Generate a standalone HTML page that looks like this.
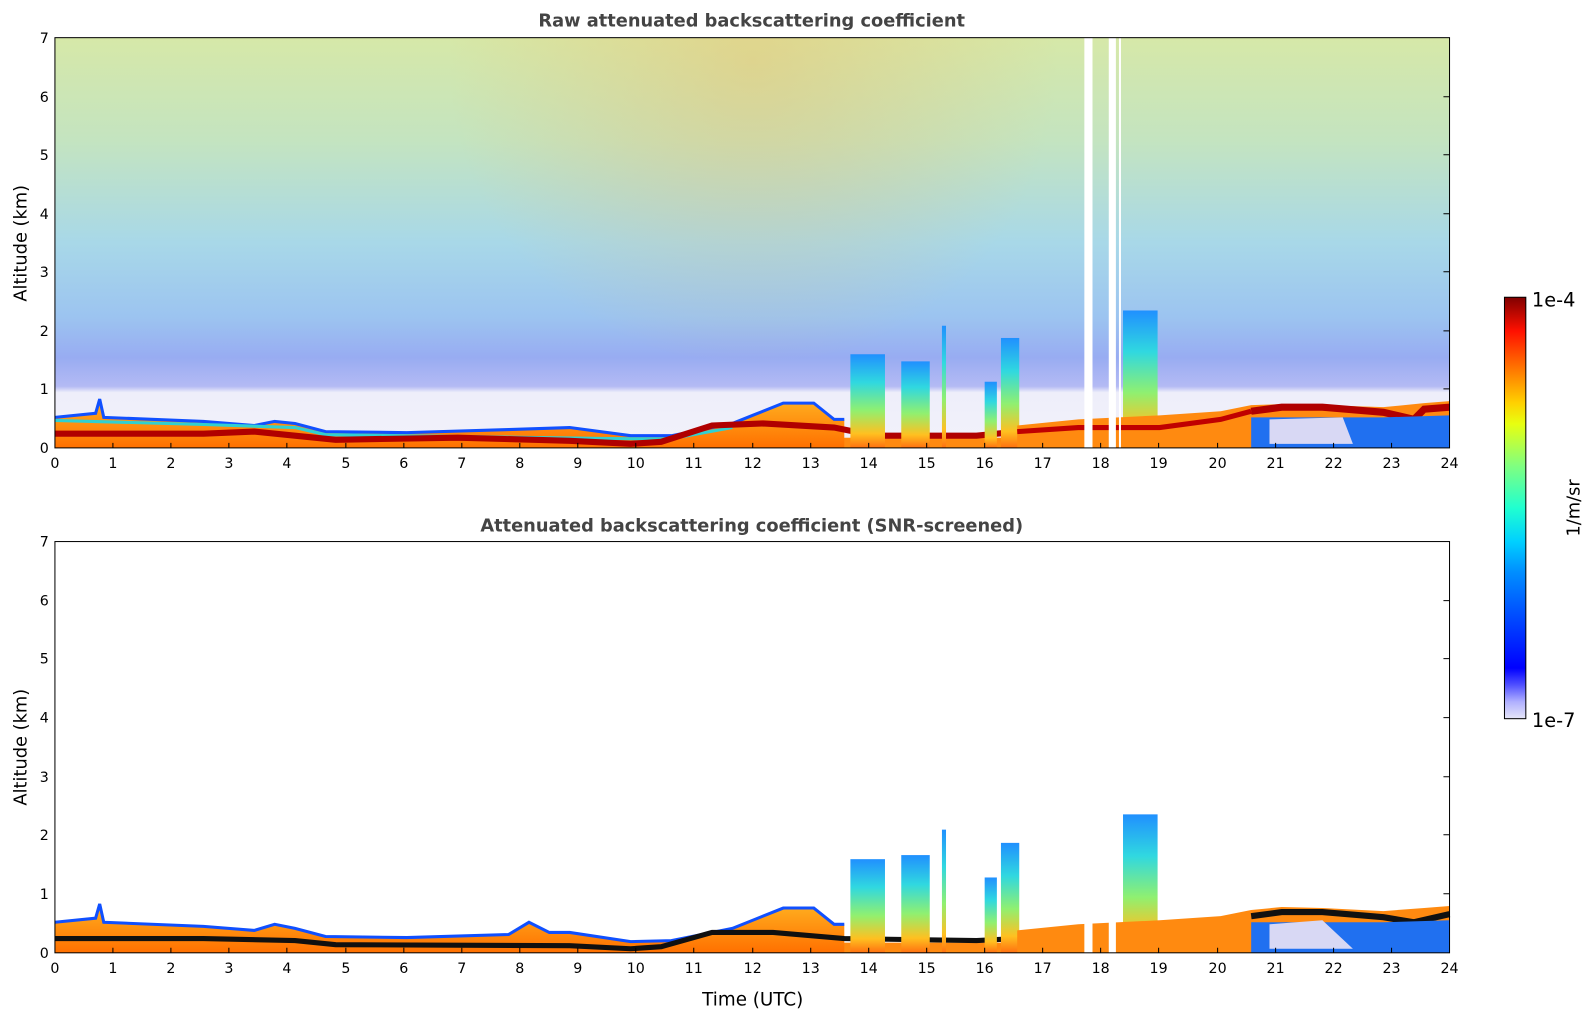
<!DOCTYPE html>
<html><head><meta charset="utf-8"><style>
html,body{margin:0;padding:0;background:#fff;}
svg{display:block}
text{font-family:"DejaVu Sans","Liberation Sans",sans-serif;}
</style></head><body>
<svg width="1595" height="1020" viewBox="0 0 1568 1002" preserveAspectRatio="none" xmlns="http://www.w3.org/2000/svg">
<defs>
<linearGradient id="bgTop" x1="0" y1="37" x2="0" y2="440" gradientUnits="userSpaceOnUse">
<stop offset="0" stop-color="#d6e8a8"/>
<stop offset="0.25" stop-color="#c4e4c0"/>
<stop offset="0.5" stop-color="#a8d8e8"/>
<stop offset="0.68" stop-color="#9cc4f0"/>
<stop offset="0.78" stop-color="#98acf2"/>
<stop offset="0.85" stop-color="#b4baf4"/>
<stop offset="0.865" stop-color="#eeeefa"/>
<stop offset="1" stop-color="#f2f2fa"/>
</linearGradient>
<radialGradient id="orangeTop" cx="740" cy="60" r="300" gradientUnits="userSpaceOnUse">
<stop offset="0" stop-color="#f0b860" stop-opacity="0.4"/>
<stop offset="1" stop-color="#f0b860" stop-opacity="0"/>
</radialGradient>
<linearGradient id="cloud" x1="0" y1="0" x2="0" y2="1">
<stop offset="0" stop-color="#2090ff"/>
<stop offset="0.3" stop-color="#30d8e0"/>
<stop offset="0.6" stop-color="#90f070"/>
<stop offset="0.85" stop-color="#ffc020"/>
<stop offset="1" stop-color="#ff7010"/>
</linearGradient>
<linearGradient id="bl" x1="0" y1="0" x2="0" y2="1">
<stop offset="0" stop-color="#ffb020"/>
<stop offset="1" stop-color="#ff7000"/>
</linearGradient>
<linearGradient id="cb" x1="0" y1="1" x2="0" y2="0">
<stop offset="0" stop-color="#e6e6f8"/>
<stop offset="0.04" stop-color="#b0b0ff"/>
<stop offset="0.08" stop-color="#5050ff"/>
<stop offset="0.12" stop-color="#0000ff"/>
<stop offset="0.25" stop-color="#0050ff"/>
<stop offset="0.35" stop-color="#0090ff"/>
<stop offset="0.42" stop-color="#00d0ff"/>
<stop offset="0.5" stop-color="#20ffd0"/>
<stop offset="0.6" stop-color="#80ff80"/>
<stop offset="0.7" stop-color="#e8ff10"/>
<stop offset="0.75" stop-color="#ffd000"/>
<stop offset="0.85" stop-color="#ff6000"/>
<stop offset="0.92" stop-color="#ff1000"/>
<stop offset="1" stop-color="#800000"/>
</linearGradient>
</defs>

<text x="739" y="26" text-anchor="middle" font-size="17.5" font-weight="bold" fill="#444">Raw attenuated backscattering coefficient</text>
<rect x="54" y="37" width="1371" height="403" fill="url(#bgTop)"/>
<rect x="54" y="37" width="1371" height="403" fill="url(#orangeTop)"/>
<rect x="54" y="430" width="1371" height="10" fill="#ff8a10"/>
<path d="M54,410 L94,406 L98,392 L102,410 L200,414 L250,418 L270,414 L290,416 L320,424 L400,425 L500,422 L560,420 L620,428 L660,428 L720,416 L740,408 L770,396 L800,396 L820,412 L830,412 L830,440 L54,440 Z" fill="url(#bl)"/>
<path d="M54,410 L94,406 L98,392 L102,410 L200,414 L250,418 L270,414 L290,416 L320,424 L400,425 L500,422 L560,420 L620,428 L660,428 L720,416 L740,408 L770,396 L800,396 L820,412 L830,412" fill="none" stroke="#1050ff" stroke-width="3"/>
<path d="M54,413 L200,417 L290,420 L320,427 L620,431 L660,431 L720,420" fill="none" stroke="#30d0d0" stroke-width="3"/>
<path d="M54,426 L200,426 L250,424 L290,428 L330,432 L450,430 L560,433 L620,436 L650,434 L700,418 L750,416 L820,420 L860,428 L960,428 L1000,424" fill="none" stroke="#b00000" stroke-width="6"/>
<rect x="836" y="348" width="34" height="92" fill="url(#cloud)"/>
<rect x="886" y="355" width="28" height="85" fill="url(#cloud)"/>
<rect x="926" y="320" width="4" height="120" fill="url(#cloud)"/>
<rect x="968" y="375" width="12" height="65" fill="url(#cloud)"/>
<rect x="984" y="332" width="18" height="108" fill="url(#cloud)"/>
<rect x="1104" y="305" width="34" height="135" fill="url(#cloud)"/>
<path d="M1000,418 L1060,412 L1140,408 L1200,404 L1230,398 L1260,397 L1300,398 L1360,400 L1400,396 L1425,394 L1425,440 L1000,440 Z" fill="#ff8a10"/>
<path d="M1000,424 L1060,420 L1140,420 L1200,412 L1230,404" fill="none" stroke="#c00000" stroke-width="5"/>
<path d="M1230,404 L1260,400 L1300,400 L1360,405 L1390,412 L1400,402 L1425,400" fill="none" stroke="#b00000" stroke-width="7"/>
<path d="M1230,410 L1360,410 L1425,408 L1425,440 L1230,440 Z" fill="#2070f0"/>
<path d="M1248,412 L1320,410 L1330,436 L1248,436 Z" fill="#d8d8f4"/>
<rect x="1066" y="37" width="8" height="403" fill="#fff"/>
<rect x="1090" y="37" width="7" height="403" fill="#fff"/>
<rect x="1100" y="37" width="2" height="403" fill="#fff"/>
<rect x="54" y="37" width="1371" height="403" fill="none" stroke="#000" stroke-width="1"/>

<text x="739" y="522" text-anchor="middle" font-size="17.5" font-weight="bold" fill="#444">Attenuated backscattering coefficient (SNR-screened)</text>
<rect x="54" y="532" width="1371" height="404" fill="#fff"/>
<rect x="54" y="926" width="1371" height="10" fill="#ff8a10"/>
<path d="M54,906 L94,902 L98,888 L102,906 L200,910 L250,914 L270,908 L290,912 L320,920 L400,921 L500,918 L520,906 L540,916 L560,916 L620,925 L660,924 L720,912 L740,904 L770,892 L800,892 L820,908 L830,908 L830,936 L54,936 Z" fill="url(#bl)"/>
<path d="M54,906 L94,902 L98,888 L102,906 L200,910 L250,914 L270,908 L290,912 L320,920 L400,921 L500,918 L520,906 L540,916 L560,916 L620,925 L660,924 L720,912 L740,904 L770,892 L800,892 L820,908 L830,908" fill="none" stroke="#1050ff" stroke-width="3"/>
<path d="M54,922 L200,922 L290,924 L330,928 L560,929 L620,932 L650,930 L700,916 L760,916 L830,922 L960,924 L1000,922" fill="none" stroke="#101010" stroke-width="5"/>
<rect x="836" y="844" width="34" height="92" fill="url(#cloud)"/>
<rect x="886" y="840" width="28" height="96" fill="url(#cloud)"/>
<rect x="926" y="815" width="4" height="121" fill="url(#cloud)"/>
<rect x="968" y="862" width="12" height="74" fill="url(#cloud)"/>
<rect x="984" y="828" width="18" height="108" fill="url(#cloud)"/>
<rect x="1104" y="800" width="34" height="136" fill="url(#cloud)"/>
<path d="M1000,914 L1060,908 L1140,904 L1200,900 L1230,894 L1260,891 L1300,892 L1360,895 L1400,892 L1425,890 L1425,936 L1000,936 Z" fill="#ff8a10"/>
<path d="M1230,900 L1260,896 L1300,896 L1360,901 L1390,906 L1425,898" fill="none" stroke="#111" stroke-width="6"/>
<path d="M1230,906 L1360,906 L1425,904 L1425,936 L1230,936 Z" fill="#2070f0"/>
<path d="M1248,908 L1300,904 L1330,932 L1248,932 Z" fill="#d8d8f4"/>
<rect x="1066" y="532" width="8" height="404" fill="#fff"/>
<rect x="1090" y="532" width="7" height="404" fill="#fff"/>
<rect x="54" y="532" width="1371" height="404" fill="none" stroke="#000" stroke-width="1"/>

<g font-size="14" fill="#000" text-anchor="middle">
<text x="54" y="460">0</text><text x="111" y="460">1</text><text x="168" y="460">2</text><text x="225" y="460">3</text><text x="282" y="460">4</text><text x="340" y="460">5</text><text x="397" y="460">6</text><text x="454" y="460">7</text><text x="511" y="460">8</text><text x="568" y="460">9</text><text x="625" y="460">10</text><text x="682" y="460">11</text><text x="740" y="460">12</text><text x="797" y="460">13</text><text x="854" y="460">14</text><text x="911" y="460">15</text><text x="968" y="460">16</text><text x="1025" y="460">17</text><text x="1082" y="460">18</text><text x="1139" y="460">19</text><text x="1197" y="460">20</text><text x="1254" y="460">21</text><text x="1311" y="460">22</text><text x="1368" y="460">23</text><text x="1425" y="460">24</text>
<text x="54" y="956">0</text><text x="111" y="956">1</text><text x="168" y="956">2</text><text x="225" y="956">3</text><text x="282" y="956">4</text><text x="340" y="956">5</text><text x="397" y="956">6</text><text x="454" y="956">7</text><text x="511" y="956">8</text><text x="568" y="956">9</text><text x="625" y="956">10</text><text x="682" y="956">11</text><text x="740" y="956">12</text><text x="797" y="956">13</text><text x="854" y="956">14</text><text x="911" y="956">15</text><text x="968" y="956">16</text><text x="1025" y="956">17</text><text x="1082" y="956">18</text><text x="1139" y="956">19</text><text x="1197" y="956">20</text><text x="1254" y="956">21</text><text x="1311" y="956">22</text><text x="1368" y="956">23</text><text x="1425" y="956">24</text>
</g>
<g font-size="14" fill="#000" text-anchor="end">
<text x="48" y="445">0</text><text x="48" y="387">1</text><text x="48" y="330">2</text><text x="48" y="272">3</text><text x="48" y="215">4</text><text x="48" y="157">5</text><text x="48" y="100">6</text><text x="48" y="42">7</text>
<text x="48" y="941">0</text><text x="48" y="883">1</text><text x="48" y="825">2</text><text x="48" y="768">3</text><text x="48" y="710">4</text><text x="48" y="652">5</text><text x="48" y="595">6</text><text x="48" y="537">7</text>
</g>
<g stroke="#000" stroke-width="1">
<path d="M111,440v-5M168,440v-5M225,440v-5M282,440v-5M340,440v-5M397,440v-5M454,440v-5M511,440v-5M568,440v-5M625,440v-5M682,440v-5M740,440v-5M797,440v-5M854,440v-5M911,440v-5M968,440v-5M1025,440v-5M1082,440v-5M1139,440v-5M1197,440v-5M1254,440v-5M1311,440v-5M1368,440v-5"/>
<path d="M111,936v-5M168,936v-5M225,936v-5M282,936v-5M340,936v-5M397,936v-5M454,936v-5M511,936v-5M568,936v-5M625,936v-5M682,936v-5M740,936v-5M797,936v-5M854,936v-5M911,936v-5M968,936v-5M1025,936v-5M1082,936v-5M1139,936v-5M1197,936v-5M1254,936v-5M1311,936v-5M1368,936v-5"/>
<path d="M1425,382h-6M1425,325h-6M1425,267h-6M1425,210h-6M1425,152h-6M1425,95h-6"/>
<path d="M1425,878h-6M1425,820h-6M1425,763h-6M1425,705h-6M1425,647h-6M1425,590h-6"/>
</g>
<text transform="translate(26,239) rotate(-90)" text-anchor="middle" font-size="17.5" fill="#000">Altitude (km)</text>
<text transform="translate(26,734) rotate(-90)" text-anchor="middle" font-size="17.5" fill="#000">Altitude (km)</text>
<text x="740" y="988" text-anchor="middle" font-size="18" fill="#000">Time (UTC)</text>

<rect x="1479" y="292" width="21" height="414" fill="url(#cb)" stroke="#000" stroke-width="1"/>
<text x="1506" y="301" font-size="19" fill="#000">1e-4</text>
<text x="1506" y="714" font-size="19" fill="#000">1e-7</text>
<text transform="translate(1553,499) rotate(-90)" text-anchor="middle" font-size="17.5" fill="#000">1/m/sr</text>
</svg>
</body></html>
